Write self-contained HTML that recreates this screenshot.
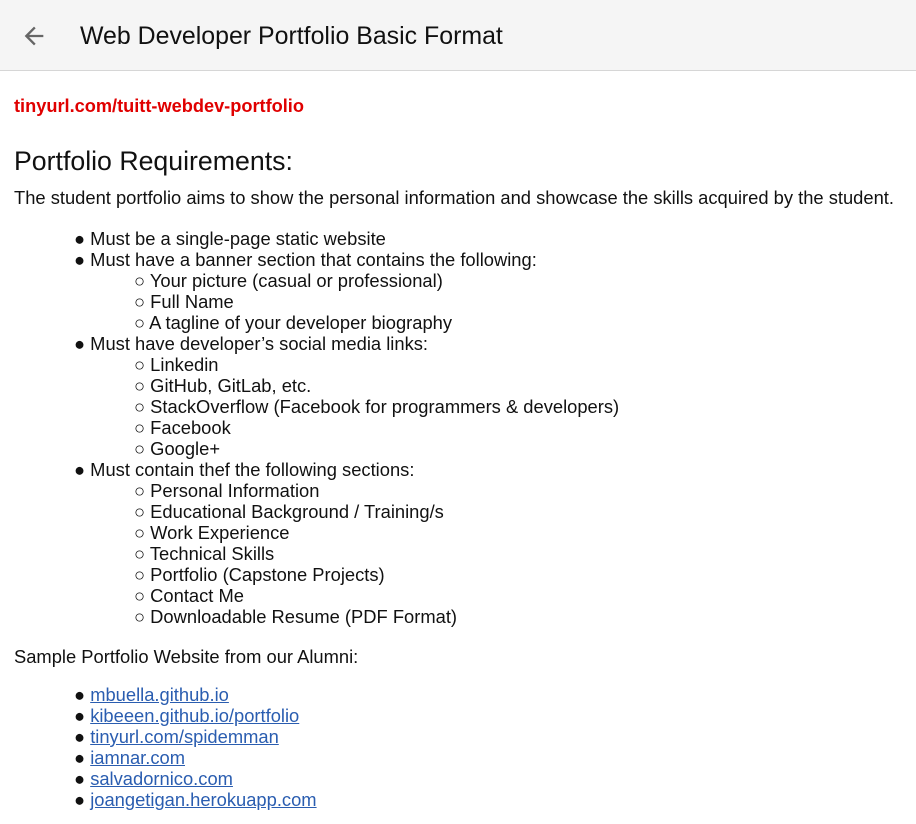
<!DOCTYPE html>
<html><head><style>
body{margin:0;width:916px;height:824px;background:#fff;font-family:"Liberation Sans",Arial,sans-serif;color:#111;overflow:hidden;position:relative}
.hdr{position:absolute;left:0;top:0;width:916px;height:70px;background:#f5f5f5;border-bottom:1px solid #d6d6d6}
.t{position:absolute;white-space:nowrap}
.l{position:absolute;font-size:18.35px;line-height:21px;white-space:nowrap}
a{color:#2a5db0;text-decoration:underline}
</style></head><body>
<div class="hdr">
<svg style="position:absolute;left:20px;top:22px" width="28" height="28" viewBox="0 0 24 24"><path d="M20 11H7.83l5.59-5.59L12 4l-8 8 8 8 1.41-1.41L7.83 13H20v-2z" fill="#666"/></svg>
<div class="t" style="left:80px;top:22px;font-size:24.9px;color:#111">Web Developer Portfolio Basic Format</div>
</div>
<div class="t" style="left:14px;top:96px;font-size:18.2px;font-weight:bold;color:#e00000">tinyurl.com/tuitt-webdev-portfolio</div>
<div class="t" style="left:14px;top:146px;font-size:26.7px">Portfolio Requirements:</div>
<div class="l" style="left:14px;top:187px">The student portfolio aims to show the personal information and showcase the skills acquired by the student.</div>
<div class="l" style="left:74px;top:228px">● Must be a single-page static website</div>
<div class="l" style="left:74px;top:249px">● Must have a banner section that contains the following:</div>
<div class="l" style="left:134px;top:270px">○ Your picture (casual or professional)</div>
<div class="l" style="left:134px;top:291px">○ Full Name</div>
<div class="l" style="left:134px;top:312px">○ A tagline of your developer biography</div>
<div class="l" style="left:74px;top:333px">● Must have developer’s social media links:</div>
<div class="l" style="left:134px;top:354px">○ Linkedin</div>
<div class="l" style="left:134px;top:375px">○ GitHub, GitLab, etc.</div>
<div class="l" style="left:134px;top:396px">○ StackOverflow (Facebook for programmers &amp; developers)</div>
<div class="l" style="left:134px;top:417px">○ Facebook</div>
<div class="l" style="left:134px;top:438px">○ Google+</div>
<div class="l" style="left:74px;top:459px">● Must contain thef the following sections:</div>
<div class="l" style="left:134px;top:480px">○ Personal Information</div>
<div class="l" style="left:134px;top:501px">○ Educational Background / Training/s</div>
<div class="l" style="left:134px;top:522px">○ Work Experience</div>
<div class="l" style="left:134px;top:543px">○ Technical Skills</div>
<div class="l" style="left:134px;top:564px">○ Portfolio (Capstone Projects)</div>
<div class="l" style="left:134px;top:585px">○ Contact Me</div>
<div class="l" style="left:134px;top:606px">○ Downloadable Resume (PDF Format)</div>
<div class="l" style="left:14px;top:646px">Sample Portfolio Website from our Alumni:</div>
<div class="l" style="left:74px;top:684px">● <a>mbuella.github.io</a></div>
<div class="l" style="left:74px;top:705px">● <a>kibeeen.github.io/portfolio</a></div>
<div class="l" style="left:74px;top:726px">● <a>tinyurl.com/spidemman</a></div>
<div class="l" style="left:74px;top:747px">● <a>iamnar.com</a></div>
<div class="l" style="left:74px;top:768px">● <a>salvadornico.com</a></div>
<div class="l" style="left:74px;top:789px">● <a>joangetigan.herokuapp.com</a></div>
</body></html>
